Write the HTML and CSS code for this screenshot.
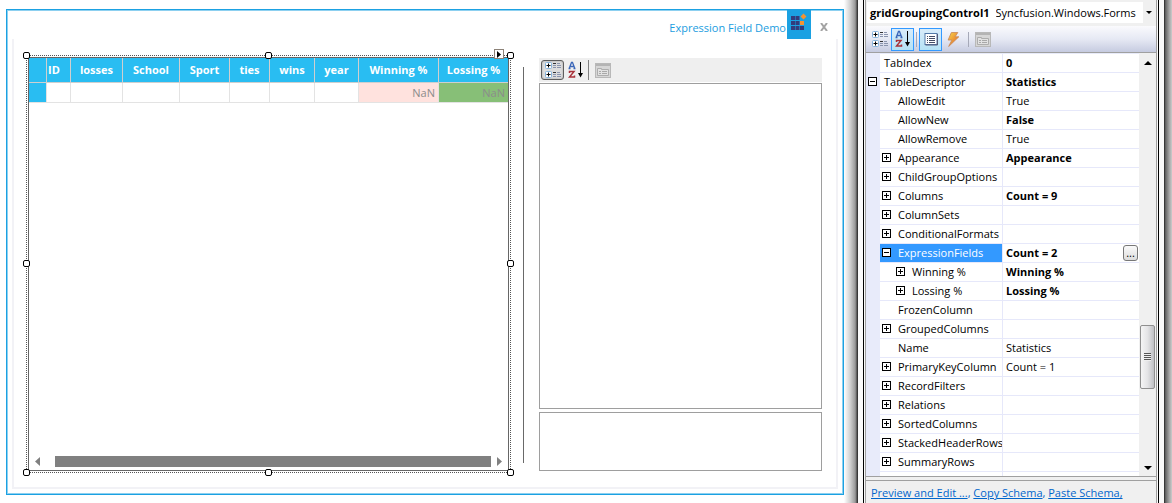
FILE: index.html
```html
<!DOCTYPE html>
<html lang="en">
<head>
<meta charset="utf-8">
<title>Expression Field Demo</title>
<link rel="stylesheet" href="styles.css">
</head>
<body>
<svg class="defs" width="0" height="0" aria-hidden="true">
  <defs>
    <linearGradient id="bolt" x1="0" y1="0" x2="1" y2="1"><stop offset="0" stop-color="#f7d94c"/><stop offset="1" stop-color="#e2561f"/></linearGradient>
    <symbol id="i-cat" viewBox="0 0 18 18">
      <g fill="#fff" stroke="#86b4dd"><rect x="1.5" y="1.5" width="6" height="6" rx="1"/><rect x="1.5" y="10.500" width="6" height="6" rx="1"/></g>
      <path d="M2.500 4.500h4M4.500 2.500v4M2.500 13.500h4M4.500 11.500v4" stroke="#000"/>
      <path d="M9 2.500h3M9 11.500h3" stroke="#333"/>
      <path d="M9 4.500h3M13 4.500h4M9 6.500h3M13 6.500h4M13 2.500h3M9 13.500h3M13 13.500h4M9 15.500h3M13 15.500h4M13 11.500h3" stroke="#8a94ad"/>
    </symbol>
    <symbol id="i-az" viewBox="0 0 16 18">
      <path d="M1 8L3.500 1.500H4.500L7 8M2.500 5.500H6M0.500 7.500H2.500M5.500 7.500H7.500" fill="none" stroke="#3a66b8" stroke-width="1.300"/>
      <path d="M1.500 12V10.500H6L1.500 16H6.500V14.500" fill="none" stroke="#a8323a" stroke-width="1.500"/>
      <path d="M12.500 1V15" stroke="#000"/><path d="M10 12H15L12.500 16.500Z"/>
    </symbol>
    <symbol id="i-pages" viewBox="0 0 16 15">
      <rect x=".5" y=".5" width="15" height="14" fill="#d6d6d6" stroke="#b8b8b8"/>
      <path d="M1 2H15" stroke="#b4b4b4" stroke-width="2"/>
      <path d="M2.500 12.500V5.500H6.500V6.500H13.500V12.500Z" fill="#e2e2e2" stroke="#adadad"/>
      <path d="M4 8.500H6M7 8.500H12M4 10.500H6M7 10.500H12" stroke="#a8a8a8"/>
    </symbol>
    <symbol id="i-props" viewBox="0 0 14 13">
      <rect x="1" y=".5" width="12" height="11" fill="#fff" stroke="#5279a8"/>
      <path d="M1.500 12H13.500V1" fill="none" stroke="#555b78"/>
      <path d="M3 3.500H4M5 3.500H11M3 5.500H4M5 5.500H11M3 7.500H4M5 7.500H11M3 9.500H4M5 9.500H11" stroke="#454d66"/>
    </symbol>
    <symbol id="i-bolt" viewBox="0 0 12 14"><path d="M4 .5H10L7.500 4.500H11L1.500 13.500L4.500 7.500H1Z" fill="url(#bolt)" stroke="#c98a5a" stroke-width=".8"/></symbol>
  </defs>
</svg>

<div class="workspace">
  <main class="designer">
    <section class="form">
      <header class="titlebar">
        <h1>Expression Field Demo</h1>
        <svg class="logo" viewBox="0 0 24 29" aria-hidden="true">
          <path fill="#1ba1e2" d="M0 0H24V29H0Z"/>
          <path fill="#323c7c" d="M4 6h4v4H4zM8.500 6h4v4h-4zM4 11h4v4H4zM8.500 11h4v4h-4zM4 16h4v4H4zM8.500 16h4v4h-4zM13 16h4v4h-4z"/>
          <path fill="#f59331" d="M13 11h4v4h-4zM16.500 3.500L19.500 6.500L16.500 9.500L13.500 6.500Z"/>
        </svg>
        <button class="close" aria-label="Close"><svg viewBox="0 0 8 8"><path d="M1 0L7 8M7 0L1 8" stroke="#a3a3a3" stroke-width="2"/></svg></button>
      </header>
      <div class="client">
        <div class="selection">
          <div class="grid">
            <table>
              <colgroup><col class="c-row"><col class="c-id"><col class="c-losses"><col class="c-school"><col class="c-sport"><col class="c-ties"><col class="c-wins"><col class="c-year"><col class="c-win"><col class="c-loss"></colgroup>
              <thead><tr><th></th><th class="id">ID</th><th>losses</th><th>School</th><th>Sport</th><th>ties</th><th>wins</th><th>year</th><th>Winning %</th><th>Lossing %</th></tr></thead>
              <tbody><tr><td class="rowhead"></td><td></td><td></td><td></td><td></td><td></td><td></td><td></td><td class="pink">NaN</td><td class="green">NaN</td></tr></tbody>
            </table>
            <div class="hscroll">
              <svg viewBox="0 0 5 9"><path d="M5 0V9L0 4.500Z"/></svg><div class="hthumb"></div><svg viewBox="0 0 5 9"><path d="M0 0V9L5 4.500Z"/></svg>
            </div>
          </div>
          <i class="handle l t"></i><i class="handle m t"></i><i class="handle r t"></i>
          <i class="handle l c"></i><i class="handle r c"></i>
          <i class="handle l b"></i><i class="handle m b"></i><i class="handle r b"></i>
          <button class="smarttag" aria-label="Tasks"><svg viewBox="0 0 4 7"><path d="M0 0V7L4 3.500Z"/></svg></button>
        </div>
        <div class="splitter"></div>
        <div class="preview">
          <div class="tools small">
            <button class="pressed" aria-label="Categorized"><svg width="18" height="18"><use href="#i-cat"/></svg></button>
            <button class="az" aria-label="Alphabetical"><svg width="16" height="18"><use href="#i-az"/></svg></button>
            <span class="sep"></span>
            <button class="pages" aria-label="Property pages" disabled><svg width="16" height="15"><use href="#i-pages"/></svg></button>
          </div>
          <div class="box list"></div>
          <div class="box help"></div>
        </div>
      </div>
    </section>
  </main>

  <aside class="dock">
    <div class="shade left"></div>
    <div class="frame">
      <div class="panel">
        <button class="object"><b>gridGroupingControl1</b><span>Syncfusion.Windows.Forms</span><i class="drop"></i></button>
        <div class="tools main">
          <button aria-label="Categorized"><svg width="18" height="18"><use href="#i-cat"/></svg></button>
          <button class="on" aria-label="Alphabetical"><svg width="16" height="18"><use href="#i-az"/></svg></button>
          <span class="sep"></span>
          <button class="on" aria-label="Properties"><svg width="14" height="13"><use href="#i-props"/></svg></button>
          <button aria-label="Events"><svg width="13" height="15"><use href="#i-bolt"/></svg></button>
          <span class="sep"></span>
          <button aria-label="Property pages" disabled><svg width="16" height="15"><use href="#i-pages"/></svg></button>
        </div>
        <div class="props">
          <div class="rows">
            <div class="row l0"><span class="name">TabIndex</span><b class="value">0</b></div>
            <div class="row l0"><button class="exp open" aria-label="Collapse"></button><span class="name">TableDescriptor</span><b class="value">Statistics</b></div>
            <div class="row l1"><span class="name">AllowEdit</span><span class="value">True</span></div>
            <div class="row l1"><span class="name">AllowNew</span><b class="value">False</b></div>
            <div class="row l1"><span class="name">AllowRemove</span><span class="value">True</span></div>
            <div class="row l1"><button class="exp" aria-label="Expand"></button><span class="name">Appearance</span><b class="value">Appearance</b></div>
            <div class="row l1"><button class="exp" aria-label="Expand"></button><span class="name">ChildGroupOptions</span><span class="value"></span></div>
            <div class="row l1"><button class="exp" aria-label="Expand"></button><span class="name">Columns</span><b class="value">Count = 9</b></div>
            <div class="row l1"><button class="exp" aria-label="Expand"></button><span class="name">ColumnSets</span><span class="value"></span></div>
            <div class="row l1"><button class="exp" aria-label="Expand"></button><span class="name">ConditionalFormats</span><span class="value"></span></div>
            <div class="row l1 selected"><button class="exp open" aria-label="Collapse"></button><span class="name">ExpressionFields</span><b class="value">Count = 2</b><button class="more" aria-label="Edit">...</button></div>
            <div class="row l2"><button class="exp" aria-label="Expand"></button><span class="name">Winning %</span><b class="value">Winning %</b></div>
            <div class="row l2"><button class="exp" aria-label="Expand"></button><span class="name">Lossing %</span><b class="value">Lossing %</b></div>
            <div class="row l1"><span class="name">FrozenColumn</span><span class="value"></span></div>
            <div class="row l1"><button class="exp" aria-label="Expand"></button><span class="name">GroupedColumns</span><span class="value"></span></div>
            <div class="row l1"><span class="name">Name</span><span class="value">Statistics</span></div>
            <div class="row l1"><button class="exp" aria-label="Expand"></button><span class="name">PrimaryKeyColumn</span><span class="value">Count = 1</span></div>
            <div class="row l1"><button class="exp" aria-label="Expand"></button><span class="name">RecordFilters</span><span class="value"></span></div>
            <div class="row l1"><button class="exp" aria-label="Expand"></button><span class="name">Relations</span><span class="value"></span></div>
            <div class="row l1"><button class="exp" aria-label="Expand"></button><span class="name">SortedColumns</span><span class="value"></span></div>
            <div class="row l1"><button class="exp" aria-label="Expand"></button><span class="name">StackedHeaderRows</span><span class="value"></span></div>
            <div class="row l1"><button class="exp" aria-label="Expand"></button><span class="name">SummaryRows</span><span class="value"></span></div>
            <div class="row l1"><span class="name"></span><span class="value"></span></div>
          </div>
          <div class="vscroll">
            <svg width="8" height="4" viewBox="0 0 8 4"><path d="M0 4L4 0L8 4Z"/></svg>
            <div class="track"><div class="vthumb"><i></i></div></div>
            <svg width="8" height="4" viewBox="0 0 8 4"><path d="M0 0L4 4L8 0Z"/></svg>
          </div>
        </div>
        <nav class="verbs"><a href="#">Preview and Edit ...</a>, <a href="#">Copy Schema</a>, <a href="#">Paste Schema,</a></nav>
      </div>
    </div>
    <div class="shade right"></div>
  </aside>
</div>
</body>
</html>
```
FILE: styles.css
```css
* { box-sizing: border-box; }
body {
  margin: 0;
  font: 11px/18px "Open Sans", "Noto Sans", sans-serif;
  color: #000;
  background: #fff;
}
button { font: inherit; margin: 0; padding: 0; border: 0; background: none; color: inherit; }
svg { display: block; flex: none; }
.defs { position: absolute; }
.workspace { display: flex; height: 100vh; overflow: hidden; }

/* Form designer */
.designer { flex: 1; min-width: 0; display: flex; padding: 9px 0 8px 6px; }
.form {
  flex: 1; min-width: 0; display: flex; flex-direction: column;
  border: 1px solid #1ba1e2;
  box-shadow: inset 0 0 0 1px #8dd0f0;
}
.titlebar { display: flex; justify-content: flex-end; height: 29px; padding-right: 15px; }
.titlebar h1 { margin: 0 1px 0 0; font-size: 11px; font-weight: 400; line-height: 36px; color: #1b9de0; }
.logo { width: 24px; height: 29px; }
.close { width: 8px; height: 8px; margin: 13px 0 0 9px; }
.client {
  flex: 1; min-height: 0; display: flex;
  margin: 0 5px 5px;
  padding: 16px 14px 14px 12px;
  border: solid #f2f2f6; border-width: 0 2px 2px;
}
.selection { position: relative; flex: 481 1 0; min-width: 0; display: flex; padding: 1px; border: 1px dotted #555; }
.grid { flex: 1; min-width: 0; display: flex; flex-direction: column; justify-content: space-between; border: 1px solid #666; }
table { width: 100%; table-layout: fixed; border-collapse: separate; border-spacing: 0; }
.c-row { width: 18px; }
.c-id { width: 24px; }
.c-losses { width: 52px; }
.c-school { width: 57px; }
.c-sport { width: 50px; }
.c-ties { width: 40px; }
.c-wins { width: 45px; }
.c-year { width: 44px; }
.c-win { width: 80px; }
.c-loss { width: 69px; }
th, td { padding: 0; border: solid #e3e3e3; border-width: 0 1px 1px 0; white-space: nowrap; overflow: hidden; }
th { height: 25px; font-weight: 700; color: #fff; background: #29bdf2; border-color: #cfcfcf; text-align: center; }
th:last-child, td:last-child { border-right: 0; }
th.id { text-align: left; padding-left: 1px; }
td { height: 20px; line-height: 19px; padding-right: 3px; text-align: right; color: #8c8c8c; }
.rowhead { background: #29bdf2; }
.pink { background: #ffe2de; }
.green { background: #87bf77; }
.hscroll { display: flex; align-items: center; height: 17px; padding: 0 6px; fill: #808080; }
.hscroll svg { width: 5px; height: 9px; }
.hthumb { flex: 1; height: 11px; margin: 0 6px 0 15px; background: #808080; }
.handle { position: absolute; width: 7px; height: 7px; background: #fff; border: 1px solid #000; border-radius: 2px; }
.handle.l { left: -4px; }
.handle.m { left: calc(50% - 4px); }
.handle.r { right: -4px; }
.handle.t { top: -4px; }
.handle.c { top: calc(50% - 4px); }
.handle.b { bottom: -4px; }
.smarttag { position: absolute; top: -7px; right: 6px; display: grid; place-items: center; width: 10px; height: 10px; background: #fff; border: 1px solid #8c8278; }
.smarttag svg { width: 4px; height: 7px; }
.splitter { flex: none; width: 1px; margin: 12px 15px 10px 12px; background: #696969; }
.preview { flex: 283 1 0; min-width: 0; display: flex; flex-direction: column; margin: 3px 0 2px; }
.box { border: 1px solid #9e9e9e; background: #fff; }
.list { flex: 1; margin: 1px 0 3px; }
.help { height: 59px; }

/* Toolbars */
.tools { display: flex; align-items: center; }
.tools button { display: grid; place-items: center; }
.tools.small { height: 24px; padding-left: 2px; background: #efefef; }
.pressed { width: 23px; height: 20px; border: 1px solid #5e5e5e; border-radius: 3px; background: #ddd; box-shadow: inset 0 0 2px #999; }
.tools .pressed { border: 1px solid #5e5e5e; }
.small .az { width: 23px; }
.small .sep { width: 1px; height: 20px; margin: 0 6px 0 1px; background: #808080; }
.tools.main { flex: none; height: 27px; padding: 0 4px; border-bottom: 1px solid #a0a0a0; background: linear-gradient(#fafafd, #e6e9f4 50%, #c6cbe0); }
.main button { width: 23px; height: 23px; }
.main button:first-child { width: 20px; margin-right: 1px; }
.main .on { border: 1px solid #3399ff; background: linear-gradient(#d9ecfa, #b5e2f5); }
.main .sep { width: 1px; height: 15px; margin: 0 2px; background: #a6a9b8; }
.main .sep:nth-of-type(2) { margin: 0 2px 0 3px; }

/* Properties dock */
.dock { flex: none; width: 328px; display: flex; background: #fafafa; }
.shade.left { width: 14px; background: linear-gradient(90deg, #fff, #d0d0d0 45%, #999 80%, #222); }
.shade.right { width: 8px; background: linear-gradient(90deg, #222, #666 20%, #aaa 70%, #ccc); }
.frame { flex: 1; min-width: 0; display: flex; margin: 0 5px; padding: 0 1px; border: solid #000; border-width: 0 1px; }
.panel { flex: 1; min-width: 0; display: flex; flex-direction: column; background: #f0f0f0; border: solid #a0a0a0; border-width: 0 1px; }
.object { flex: none; display: flex; align-items: center; gap: 6px; height: 21px; margin: 2px 2px 3px 1px; padding-left: 3px; background: #fff; text-align: left; }
.object span { flex: 1; min-width: 0; overflow: hidden; white-space: nowrap; }
.drop { display: grid; place-items: center; width: 11px; height: 21px; margin-left: -5px; background: #f0f0f0; }
.drop::after { content: ""; border: solid transparent; border-width: 3px 3px 0; border-top-color: #000; }
.props { flex: 1; min-height: 0; display: flex; border-bottom: 1px solid #a0a0a0; }
.rows { flex: 1; min-width: 0; overflow: hidden; padding: 1px 0 0 14px; background: #e8ebfa; }
.row { position: relative; display: grid; grid-template-columns: 122px 1fr; height: 19px; background: #fff; border-bottom: 1px solid #e6e8fa; }
.name, .value { overflow: hidden; white-space: nowrap; }
.name { grid-column: 1; grid-row: 1; }
.value { grid-column: 2; padding-left: 3px; border-left: 1px solid #e6e8fa; }
.l0 .name { padding-left: 4px; }
.l1 .name { padding-left: 18px; }
.l2 .name { padding-left: 32px; }
.selected .name { color: #fff; background: #3399ff; }
.exp {
  position: absolute; top: 4px; left: 2px; width: 9px; height: 9px; border: 1px solid #000;
  background: linear-gradient(#000, #000) center / 5px 1px no-repeat, linear-gradient(#000, #000) center / 1px 5px no-repeat, #fff;
}
.exp.open { background: linear-gradient(#000, #000) center / 5px 1px no-repeat, #fff; }
.l0 .exp { left: -12px; }
.l2 .exp { left: 16px; }
.more { position: absolute; right: 1px; top: 1px; width: 15px; height: 16px; line-height: 12px; border: 1px solid #777; border-radius: 3px; background: linear-gradient(#fafafa, #ddd); }
.vscroll { flex: none; width: 17px; display: flex; flex-direction: column; align-items: center; padding: 8px 0 6px; background: #f0f0f0; }
.track { flex: 1; width: 15px; display: flex; flex-direction: column; justify-content: flex-end; padding-bottom: 77px; }
.vthumb { display: grid; place-items: center; height: 64px; border: 1px solid #8f8f8f; border-radius: 2px; background: linear-gradient(90deg, #f5f5f5, #e4e4e6 50%, #bfc0c4); }
.vthumb i { width: 7px; height: 8px; background: repeating-linear-gradient(#555 0 1px, #eee 1px 2px); }
.verbs { flex: none; height: 23px; margin-top: 3px; padding: 3px 0 0 5px; border-top: 1px solid #a0a0a0; white-space: nowrap; overflow: hidden; color: #0066cc; }
.verbs a { color: #0066cc; }
```
